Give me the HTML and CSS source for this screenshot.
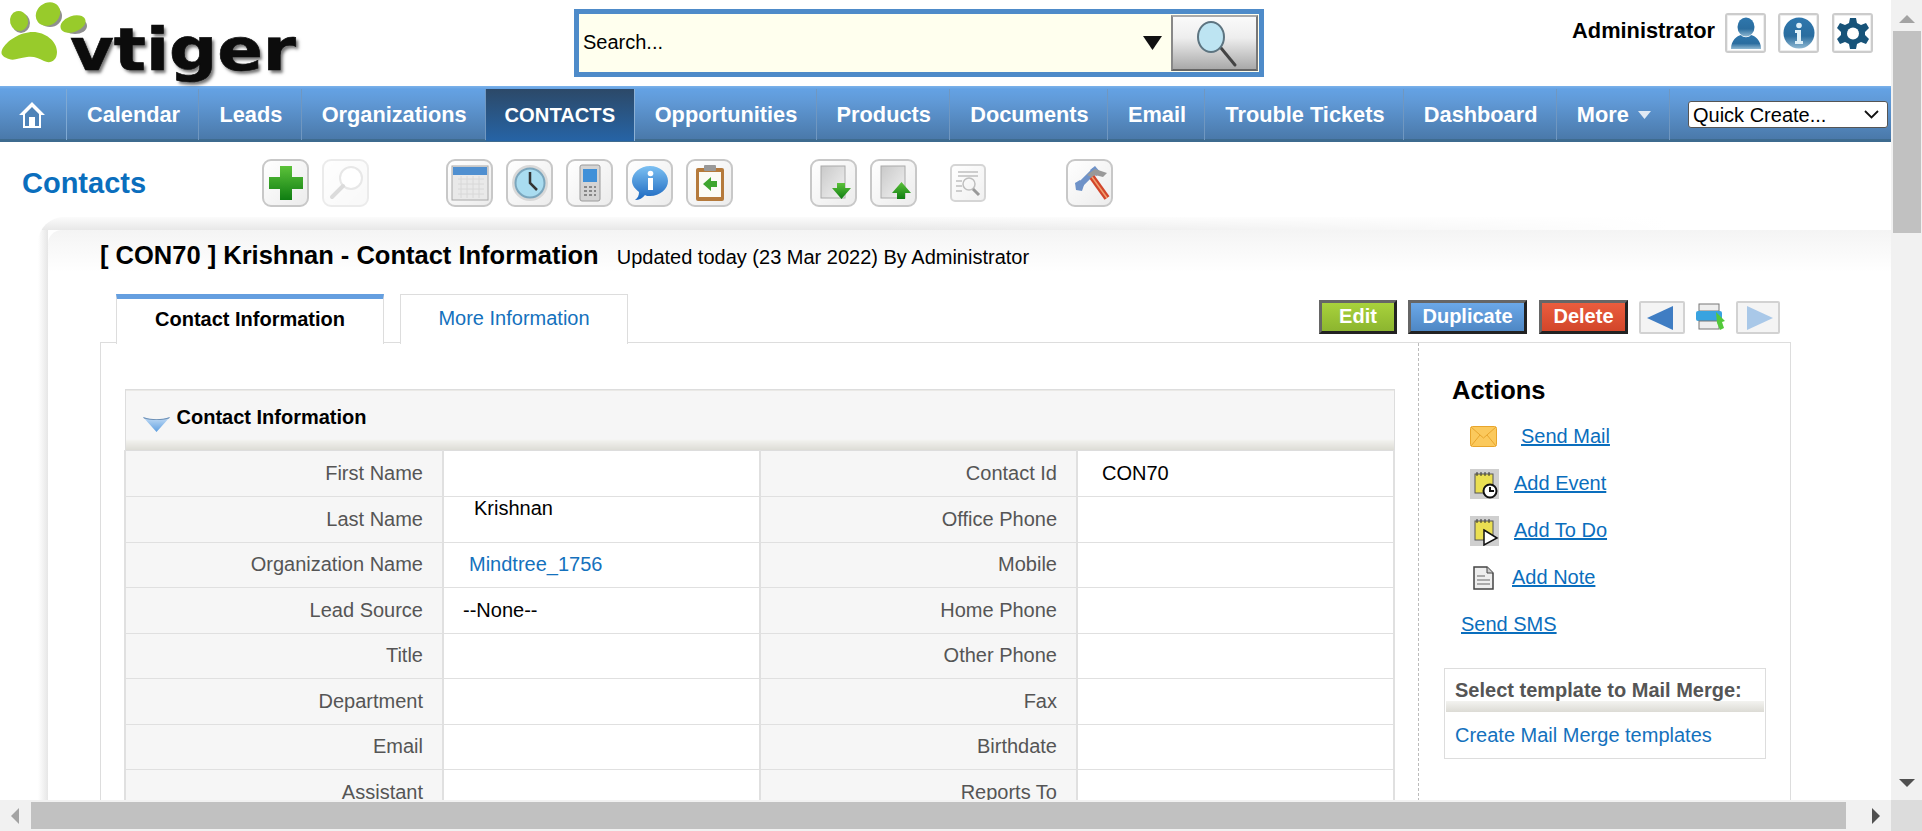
FILE: index.html
```html
<!DOCTYPE html>
<html lang="en">
<head>
<meta charset="utf-8">
<title>Contacts - vtiger CRM</title>
<link rel="stylesheet" href="styles.css">
</head>
<body>
<svg class="defs" width="0" height="0" aria-hidden="true">
  <defs>
    <linearGradient id="gGreen" x1="0" y1="0" x2="0" y2="1"><stop offset="0" stop-color="#5cc23a"/><stop offset="1" stop-color="#0f7d12"/></linearGradient>
    <linearGradient id="gBlue" x1="0" y1="0" x2="0" y2="1"><stop offset="0" stop-color="#7cc0f2"/><stop offset="1" stop-color="#1c68c0"/></linearGradient>
    <linearGradient id="gSteel" x1="0" y1="0" x2="0" y2="1"><stop offset="0" stop-color="#2f77ad"/><stop offset=".6" stop-color="#2a6d9f"/><stop offset="1" stop-color="#8fb8d2"/></linearGradient>
    <linearGradient id="gDoc" x1="0" y1="0" x2="1" y2="1"><stop offset="0" stop-color="#c9c9c9"/><stop offset="1" stop-color="#f2f2f2"/></linearGradient>
    <linearGradient id="gTri" x1="0" y1="0" x2="0" y2="1"><stop offset="0" stop-color="#c4ddf6"/><stop offset="1" stop-color="#5f9fe0"/></linearGradient>
  </defs>
</svg>
<div class="shell">
  <div class="viewport">
    <header class="top">
      <div class="logo">
        <svg class="paw" width="92" height="68" viewBox="0 0 92 68">
          <g fill="#333" opacity=".55" transform="translate(2 2)">
            <ellipse cx="19" cy="21" rx="9" ry="10"/><ellipse cx="48" cy="14" rx="12" ry="11"/><ellipse cx="73" cy="24" rx="12" ry="8"/>
          </g>
          <g fill="#98cb2b">
            <ellipse cx="19" cy="21" rx="9" ry="10" transform="rotate(-15 19 21)"/>
            <ellipse cx="48" cy="14" rx="13" ry="11" transform="rotate(-40 48 14)"/>
            <ellipse cx="73" cy="24" rx="13" ry="8" transform="rotate(-20 73 24)"/>
            <path d="M2 50C6 41 20 32 33 32c12 0 24 9 24 20 0 9-7 12-13 9-6-3-10-5-17-4-8 1-13 4-18 2-5-2-9-4-7-9z"/>
          </g>
        </svg>
        <span class="logo-text">vtiger</span>
      </div>
      <form class="search">
        <input class="search-input" type="text" value="Search..." aria-label="Search">
        <svg class="search-caret" width="19" height="14" viewBox="0 0 19 14"><path d="M0 0h19L9.500 14z" fill="#111"/></svg>
        <button class="search-go" type="button" aria-label="Go">
          <svg width="48" height="50" viewBox="0 0 48 50"><path d="M29 30l14 17" stroke="#444" stroke-width="3" stroke-linecap="round"/><ellipse cx="19" cy="19" rx="13" ry="15" fill="#bde4f2" stroke="#5d7480" stroke-width="2"/></svg>
        </button>
      </form>
      <div class="user">
        <span class="user-name">Administrator</span>
        <a class="user-btn"><svg width="34" height="34" viewBox="0 0 34 34"><ellipse cx="17" cy="11" rx="8.500" ry="9.500" fill="url(#gSteel)"/><path d="M2 33c0-9 6-13 10-14 2 3 8 3 10 0 4 1 10 5 10 14z" fill="url(#gSteel)"/></svg></a>
        <a class="user-btn gap-info"><svg width="34" height="34" viewBox="0 0 34 34"><circle cx="17" cy="17" r="15.500" fill="url(#gSteel)"/><circle cx="17" cy="9.500" r="2.800" fill="#dff0f8"/><path d="M13 14h6v11h2v3h-8v-3h2v-8h-2z" fill="#dff0f8"/></svg></a>
        <a class="user-btn gap-gear"><svg width="34" height="34" viewBox="0 0 34 34"><path d="M14 2h6l1 5 4 2 5-2 3 5-4 4v3l4 4-3 5-5-2-4 2-1 5h-6l-1-5-4-2-5 2-3-5 4-4v-3L1 12l3-5 5 2 4-2z" fill="#175379"/><circle cx="17" cy="17.500" r="6" fill="#fff"/></svg></a>
      </div>
    </header>

    <nav class="nav">
      <a class="nav-home"><svg width="28" height="30" viewBox="0 0 28 30"><path d="M14 2L1 15h4v13h18V15h4z" fill="#fff"/><path d="M14 7l-7 7v12h4V17h6v9h4V14z" fill="#4f83b8"/><rect x="12" y="17" width="4" height="9" fill="#fff"/></svg></a>
      <a class="nav-item">Calendar</a>
      <a class="nav-item">Leads</a>
      <a class="nav-item">Organizations</a>
      <a class="nav-item nav-active">CONTACTS</a>
      <a class="nav-item">Opportunities</a>
      <a class="nav-item">Products</a>
      <a class="nav-item">Documents</a>
      <a class="nav-item">Email</a>
      <a class="nav-item">Trouble Tickets</a>
      <a class="nav-item">Dashboard</a>
      <a class="nav-item nav-more">More <svg width="13" height="8" viewBox="0 0 13 8"><path d="M0 0h13L6.500 8z" fill="#dfe9f4"/></svg></a>
      <select class="quick" aria-label="Quick Create"><option>Quick Create...</option></select>
    </nav>

    <section class="modbar">
      <h1 class="mod-title">Contacts</h1>
      <a class="tool"><svg width="40" height="40" viewBox="0 0 40 40"><path d="M14 3h12v11h11v12H26v11H14V26H3V14h11z" fill="url(#gGreen)"/></svg></a>
      <a class="tool tool-off gap-s"><svg width="40" height="40" viewBox="0 0 40 40"><circle cx="25" cy="15" r="11" fill="#fff" stroke="#bbb" stroke-width="2"/><path d="M17 23L6 34" stroke="#999" stroke-width="4" stroke-linecap="round"/></svg></a>
      <a class="tool gap-l"><svg width="40" height="40" viewBox="0 0 40 40"><rect x="2" y="3" width="36" height="34" fill="#e9e9e9" stroke="#a8a8a8"/><rect x="3" y="4" width="34" height="8" fill="#4f8fd0"/><path d="M8 16h26M8 21h26M8 26h26M8 31h26M11 13v22M17 13v22M23 13v22M29 13v22" stroke="#d8d8d8"/></svg></a>
      <a class="tool gap-s"><svg width="40" height="40" viewBox="0 0 40 40"><circle cx="20" cy="20" r="18" fill="#d8d8d8"/><circle cx="20" cy="20" r="14.500" fill="#a9dcf0" stroke="#7ba6bd" stroke-width="2"/><path d="M20 9v11l7 7" fill="none" stroke="#333" stroke-width="2.500"/></svg></a>
      <a class="tool gap-s"><svg width="40" height="40" viewBox="0 0 40 40"><rect x="10" y="2" width="20" height="36" rx="2" fill="#d4d4d4" stroke="#9a9a9a"/><rect x="13" y="6" width="14" height="13" fill="#3f90d8"/><path d="M14 24h3M19 24h3M24 24h2M14 28h3M19 28h3M24 28h2M14 32h3M19 32h3M24 32h2" stroke="#888" stroke-width="2"/></svg></a>
      <a class="tool gap-s"><svg width="40" height="40" viewBox="0 0 40 40"><path d="M20 3c10 0 18 7 18 15s-8 15-18 15c-2 0-4 0-5-1-2 3-6 5-10 5 3-2 4-5 4-8-4-3-7-7-7-11C2 10 10 3 20 3z" fill="url(#gBlue)"/><rect x="18" y="15" width="5" height="12" fill="#fff"/><circle cx="20.500" cy="10.500" r="2.800" fill="#fff"/></svg></a>
      <a class="tool gap-s"><svg width="40" height="40" viewBox="0 0 40 40"><rect x="6" y="5" width="28" height="33" rx="2" fill="#b57a3c"/><rect x="9" y="9" width="22" height="25" fill="#fbfbf6"/><rect x="14" y="2" width="12" height="6" rx="1" fill="#999"/><path d="M13 21l8-7v4h6v6h-6v4z" fill="#3ea52e"/></svg></a>
      <a class="tool gap-l"><svg width="40" height="40" viewBox="0 0 40 40"><rect x="7" y="3" width="24" height="32" fill="url(#gDoc)" stroke="#aaa"/><path d="M18 25h5v-5h8v5h6L27.500 36z" fill="url(#gGreen)"/></svg></a>
      <a class="tool gap-s"><svg width="40" height="40" viewBox="0 0 40 40"><rect x="7" y="3" width="24" height="32" fill="url(#gDoc)" stroke="#aaa"/><path d="M18 30h5v6h8v-6h6l-9.500-11z" fill="url(#gGreen)"/></svg></a>
      <a class="tool tool-small gap-m"><svg width="30" height="30" viewBox="0 0 30 30"><g fill="none" stroke="#aaa" stroke-width="1.500"><path d="M5 4h20M5 8h20M3 13h6M3 18h6M3 23h6"/><circle cx="16" cy="16" r="6"/></g><path d="M20 21l6 6" stroke="#777" stroke-width="3"/></svg></a>
      <a class="tool gap-x"><svg width="40" height="40" viewBox="0 0 40 40"><path d="M25 7l-15 15" stroke="#6e92c8" stroke-width="6"/><path d="M5 20l5-3 4 5-2 6-6-1z" fill="#6e92c8"/><path d="M25 3l6 7-5 3-6-6z" fill="#6e92c8"/><path d="M17 12l8-6 12 4-4 4-8-2-2 3z" fill="#999"/><path d="M22 14l15 21" stroke="#d2452a" stroke-width="6"/><path d="M22 14l15 21" stroke="#f0a070" stroke-width="1.500"/></svg></a>
    </section>

    <div class="card-shade">
      <main class="card">
        <div class="rec-head">
          <h2 class="rec-title">[ CON70 ] Krishnan - Contact Information</h2>
          <span class="rec-sub">Updated today (23 Mar 2022) By Administrator</span>
        </div>
        <div class="tabs">
          <a class="tab tab-on">Contact Information</a>
          <a class="tab">More Information</a>
          <div class="rec-actions">
            <button class="btn btn-edit" type="button">Edit</button>
            <button class="btn btn-dup" type="button">Duplicate</button>
            <button class="btn btn-del" type="button">Delete</button>
            <a class="pager"><svg width="30" height="24" viewBox="0 0 30 24"><path d="M0 12L26 0v24z" fill="#3f7dc3"/></svg></a>
            <a class="printer"><svg width="30" height="28" viewBox="0 0 30 28"><rect x="3" y="1" width="20" height="7" fill="#eee" stroke="#777"/><rect x="0" y="8" width="26" height="10" rx="2" fill="#39a3e0"/><rect x="3" y="18" width="20" height="8" fill="#eee" stroke="#777"/><path d="M20 9l9 9-3 1 2 6-4 2-3-7z" fill="#53c93a"/></svg></a>
            <a class="pager pager-off"><svg width="30" height="24" viewBox="0 0 30 24"><path d="M30 12L4 0v24z" fill="#a9c8e8"/></svg></a>
          </div>
        </div>
        <div class="panel">
          <div class="panel-main">
            <table class="fields">
              <colgroup><col class="col-first"><col class="col-rest"><col class="col-rest"><col class="col-rest"></colgroup>
              <thead>
                <tr><th class="fields-head" colspan="4"><svg width="27" height="16" viewBox="0 0 27 16"><path d="M0 1c9 3 18 3 27 0L13.500 16z" fill="url(#gTri)"/><path d="M0 1c9 3 18 3 27 0l-1 1.500c-8 2-17 2-25 0z" fill="#6d8fb4"/></svg><span>Contact Information</span></th></tr>
              </thead>
              <tbody>
                <tr><td class="lbl">First Name</td><td class="val"></td><td class="lbl">Contact Id</td><td class="val val-id">CON70</td></tr>
                <tr><td class="lbl">Last Name</td><td class="val val-name">Krishnan</td><td class="lbl">Office Phone</td><td class="val"></td></tr>
                <tr><td class="lbl">Organization Name</td><td class="val val-org"><a>Mindtree_1756</a></td><td class="lbl">Mobile</td><td class="val"></td></tr>
                <tr><td class="lbl">Lead Source</td><td class="val val-src">--None--</td><td class="lbl">Home Phone</td><td class="val"></td></tr>
                <tr><td class="lbl">Title</td><td class="val"></td><td class="lbl">Other Phone</td><td class="val"></td></tr>
                <tr><td class="lbl">Department</td><td class="val"></td><td class="lbl">Fax</td><td class="val"></td></tr>
                <tr><td class="lbl">Email</td><td class="val"></td><td class="lbl">Birthdate</td><td class="val"></td></tr>
                <tr><td class="lbl">Assistant</td><td class="val"></td><td class="lbl">Reports To</td><td class="val"></td></tr>
              </tbody>
            </table>
          </div>
          <aside class="panel-side">
            <h3 class="side-title">Actions</h3>
            <div class="act act-mail"><svg width="27" height="21" viewBox="0 0 27 21"><rect x=".5" y=".5" width="26" height="20" rx="2" fill="#fbc95c" stroke="#e8a52c"/><path d="M1 1l12.500 11L26 1M1 20l9-11M26 20l-9-11" fill="none" stroke="#e8a52c"/></svg><a>Send Mail</a></div>
            <div class="act act-cal"><svg width="29" height="30" viewBox="0 0 29 30"><rect width="29" height="30" fill="#cfcfcf"/><rect x="5" y="5" width="18" height="19" fill="#eadf52" stroke="#555"/><path d="M7 3v4M11 3v4M15 3v4M19 3v4" stroke="#333"/><circle cx="20" cy="22" r="6.500" fill="#fff" stroke="#111" stroke-width="2"/><path d="M20 18v4h4" fill="none" stroke="#111" stroke-width="2"/></svg><a>Add Event</a></div>
            <div class="act act-cal"><svg width="29" height="30" viewBox="0 0 29 30"><rect width="29" height="30" fill="#cfcfcf"/><rect x="5" y="5" width="18" height="19" fill="#eadf52" stroke="#555"/><path d="M7 3v4M11 3v4M15 3v4M19 3v4" stroke="#333"/><path d="M14 14l13 8-13 7z" fill="#fff" stroke="#111" stroke-width="1.500"/></svg><a>Add To Do</a></div>
            <div class="act act-note"><svg width="21" height="24" viewBox="0 0 21 24"><path d="M1 1h13l6 6v16H1z" fill="#eee" stroke="#444" stroke-width="1.500"/><path d="M14 1v6h6" fill="#ccc" stroke="#444"/><path d="M4 10h8M4 14h13M4 18h13" stroke="#666"/></svg><a>Add Note</a></div>
            <div class="act act-sms"><a>Send SMS</a></div>
            <div class="merge">
              <div class="merge-head">Select template to Mail Merge:</div>
              <div class="merge-band"></div>
              <a class="merge-link">Create Mail Merge templates</a>
            </div>
          </aside>
        </div>
      </main>
    </div>
  </div>

  <div class="vbar">
    <span class="arrow-up"></span>
    <span class="vthumb"></span>
    <span class="arrow-down"></span>
  </div>
  <div class="hbar">
    <span class="arrow-left"></span>
    <span class="hthumb"></span>
    <span class="arrow-right"></span>
  </div>
  <div class="corner"></div>
</div>
</body>
</html>
```

FILE: styles.css
```css
* { box-sizing: border-box; }
html, body { margin: 0; height: 100%; overflow: hidden; background: #fff; }
body { font-family: "Liberation Sans", Arial, sans-serif; font-size: 20px; color: #000; }
a { color: inherit; text-decoration: none; }
h1, h2, h3 { margin: 0; }
.defs { display: block; height: 0; }

.shell { display: grid; grid-template-columns: 1891px 31px; grid-template-rows: 800px 31px; height: 831px; }
.viewport { overflow: hidden; }

/* header */
.top { display: flex; height: 86px; }
.logo { position: relative; flex: none; width: 574px; height: 86px; }
.paw { display: block; margin: 0; filter: blur(.4px); }
.logo-text { position: absolute; left: 70px; top: 17px; font-family: "DejaVu Sans", sans-serif; font-weight: 700; font-size: 58px; line-height: 66px; color: #0c0c0c; -webkit-text-stroke: .6px #0c0c0c; transform: scaleX(1.16); transform-origin: left top; text-shadow: 2px 3px 3px rgba(0,0,0,.55); }
.search { flex: none; display: flex; align-items: center; width: 690px; height: 68px; margin-top: 9px; border: 5px solid #4e8bc9; background: #ffffee; }
.search-input { flex: 1; min-width: 0; height: 100%; border: 0; padding: 0 4px 2px; background: transparent; font: 20px "Liberation Sans", Arial, sans-serif; color: #000; outline: 0; }
.search-caret { flex: none; margin: 0 9px 0 0; }
.search-go { flex: none; width: 87px; height: 56px; margin-right: 1px; padding: 0 0 0 2px; display: flex; align-items: center; justify-content: center; border: 2px solid; border-color: #aaa #777 #666 #888; background: linear-gradient(#fafafa, #eee 40%, #a9a9a9); }
.user { display: flex; align-items: flex-start; margin-left: auto; padding: 13px 18px 0 0; }
.user-name { font-weight: 700; font-size: 21.800px; line-height: 36px; margin-right: 10px; }
.user-btn { display: flex; align-items: center; justify-content: center; width: 41px; height: 40px; background: #fff; border: 2px solid #ccc; border-radius: 3px; box-shadow: inset 0 0 0 1px #eee; }
.gap-info { margin-left: 12px; }
.gap-gear { margin-left: 13px; }

/* main navigation */
.nav { display: flex; align-items: flex-start; height: 56px; padding-top: 3px; border-bottom: 3px solid #3e6b8f; background: linear-gradient(#7cb2ea, #64a2e4 3px, #6099d6 30%, #4a79aa); }
.nav-home { flex: none; display: flex; align-items: center; justify-content: center; width: 67px; height: 51px; padding-right: 2px; border-right: 1px solid #7fa9d3; }
.nav-item { flex: none; display: flex; align-items: center; height: 51px; padding: 0 18.350px 0 20px; border-right: 1px solid #7097c0; font-weight: 700; font-size: 21.750px; color: #fff; }
.nav-active { height: 52px; padding: 0 18.500px 0 18.500px; font-size: 20.200px; border-right-color: #8cb0d4; background: linear-gradient(#2c4968, #2664a6); }
.nav-more svg { margin-left: 5px; }
.nav-more { gap: 4px; }
.quick { flex: none; width: 200px; height: 27px; margin: 12px 3px 0 auto; padding: 0 24px 0 4px; appearance: none; -webkit-appearance: none; border: 1px solid #555; border-radius: 3px; background: #fff url("data:image/svg+xml,%3Csvg xmlns='http://www.w3.org/2000/svg' width='15' height='9'%3E%3Cpath d='M1 1l6.500 6.500L14 1' fill='none' stroke='%23111' stroke-width='1.800'/%3E%3C/svg%3E") no-repeat right 8px center; font: 20px "Liberation Sans", Arial, sans-serif; color: #000; }

/* module bar */
.modbar { display: flex; align-items: flex-start; height: 75px; padding: 17px 0 0 22px; }
.mod-title { width: 240px; font-size: 29px; line-height: 48px; color: #0a6ebd; }
.tool { flex: none; display: flex; align-items: center; justify-content: center; width: 47px; height: 48px; border: 2px solid #c8c8c8; border-radius: 9px; background: linear-gradient(135deg, #fff, #ececec); filter: blur(.35px); }
.tool-off { opacity: .35; }
.tool-small { width: 36px; height: 38px; margin-top: 5px; border-radius: 5px; opacity: .75; }
.gap-s { margin-left: 13px; }
.gap-l { margin-left: 77px; }
.gap-m { margin-left: 33px; }
.gap-x { margin-left: 80px; }

/* record card */
.card-shade { margin-left: 38px; padding: 13px 0 0 10px; height: 600px; border-radius: 26px 0 0 0;
  background:
    linear-gradient(to right, rgba(255,255,255,0) 45%, #fff 88%) top / 100% 13px no-repeat,
    linear-gradient(#fbfbfb, #e8e8e8) top / 100% 13px no-repeat,
    linear-gradient(to right, #fff, #e6e6e6) left / 10px 100% no-repeat; }
.card { height: 100%; padding-left: 52px; border-radius: 14px 0 0 0; background: linear-gradient(#f4f4f4, #fff 42px); }
.rec-head { display: flex; align-items: baseline; gap: 18px; height: 64px; padding-top: 10px; }
.rec-title { font-size: 25.500px; line-height: 30px; font-weight: 700; }
.rec-sub { font-size: 20px; }

.tabs { display: flex; width: 1691px; height: 49px; padding: 0 11px 0 16px; margin-bottom: -1px; align-items: flex-start; }
.tab { display: flex; align-items: center; justify-content: center; width: 228px; height: 50px; margin-left: 16px; padding-bottom: 2px; border: 1px solid #ddd; border-bottom: 0; background: #fff; color: #1471bd; position: relative; }
.tab-on { width: 268px; margin-left: 0; border-top: 5px solid #659fe0; padding-bottom: 4px; color: #000; font-weight: 700; z-index: 1; }
.rec-actions { display: flex; align-items: flex-start; margin-left: auto; padding-top: 6px; }
.btn { width: auto; height: 34px; padding: 0 0 2px; border: 3px solid; border-color: #666 #222 #222 #666; font: 700 20px "Liberation Sans", Arial, sans-serif; color: #fff; }
.btn-edit { width: 78px; background: linear-gradient(#a8d23c, #8cb52f); }
.btn-dup { width: 119px; margin-left: 11px; background: linear-gradient(#6ba8e8, #4e87c4); }
.btn-del { width: 89px; margin-left: 12px; background: linear-gradient(#ea5d3e, #d2462a); }
.pager { display: flex; align-items: center; justify-content: center; width: 46px; height: 33px; margin: 1px 0 0 11px; border: 2px solid #d2d2d2; border-radius: 2px; background: #f4f4f4; }
.pager-off { width: 44px; margin-left: 10px; }
.printer { display: block; width: 30px; height: 28px; margin: 3px 0 0 11px; }

.panel { display: flex; width: 1691px; height: 500px; border: 1px solid #ddd; background: #fff; }
.panel-main { width: 1317px; padding: 46px 0 0 23px; }
.panel-side { width: 372px; padding-top: 25px; border-left: 1px dashed #bbb; }

.fields { width: 1269px; table-layout: fixed; border-collapse: collapse; border: 1px solid #ddd; }
.col-first { width: 318px; }
.col-rest { width: 317px; }
.fields-head { height: 61px; padding: 0 0 3px 17px; text-align: left; font-weight: 700; font-size: 20px; background: linear-gradient(#f6f6f6 49px, #f1f1ee 50px, #dcdbd5); border-bottom: 1px solid #ddd; }
.fields-head svg { margin: 0 7px 0 0; vertical-align: -8px; }
.fields td { height: 45.500px; padding: 0; border: 1px solid #e0e0e0; border-width: 1px 2px; border-left-color: #e0e0e0; }
.lbl { padding-right: 19px !important; text-align: right; background: #f6f6f6; color: #555; }
.val-id { padding-left: 24px !important; }
.val-name { padding: 0 0 22px 30px !important; }
.val-org { padding-left: 25px !important; color: #1471bd; }
.val-src { padding-left: 19px !important; }

.side-title { height: 45px; padding-left: 33px; font-size: 25.500px; line-height: 45px; }
.act { display: flex; align-items: center; height: 47px; color: #0a6ebd; }
.act a { text-decoration: underline; }
.act-mail { padding-left: 51px; gap: 24px; }
.act-cal { padding-left: 51px; gap: 15px; }
.act-note { padding-left: 54px; gap: 18px; }
.act-sms { padding-left: 42px; }
.merge { display: flex; flex-direction: column; width: 322px; height: 91px; margin: 20px 0 0 25px; border: 1px solid #ddd; padding: 0 1px; }
.merge-head { height: 32px; padding-left: 9px; font-weight: 700; font-size: 20px; line-height: 42px; color: #555; white-space: nowrap; }
.merge-band { height: 11px; background: linear-gradient(#f3f3f0, #dcdbd5); }
.merge-link { padding: 11px 0 0 9px; color: #1471bd; line-height: 24px; }

/* scrollbars */
.vbar { grid-column: 2; grid-row: 1; display: flex; flex-direction: column; align-items: center; background: #f1f1f1; }
.hbar { grid-column: 1; grid-row: 2; display: flex; align-items: center; background: #f1f1f1; }
.corner { grid-column: 2; grid-row: 2; background: #dcdcdc; }
.vthumb { width: 28px; height: 202px; margin-top: 8px; background: #c1c1c1; }
.hthumb { width: 1815px; height: 27px; margin-left: 12px; background: #c1c1c1; }
.arrow-up { width: 0; height: 0; margin-top: 15px; border: 8px solid transparent; border-top: 0; border-bottom-color: #a3a3a3; }
.arrow-down { width: 0; height: 0; margin-top: auto; margin-bottom: 13px; border: 8px solid transparent; border-bottom: 0; border-top-color: #505050; }
.arrow-left { width: 0; height: 0; margin-left: 11px; border: 8px solid transparent; border-left: 0; border-right-color: #a3a3a3; }
.arrow-right { width: 0; height: 0; margin-left: 26px; border: 8px solid transparent; border-right: 0; border-left-color: #505050; }
```
